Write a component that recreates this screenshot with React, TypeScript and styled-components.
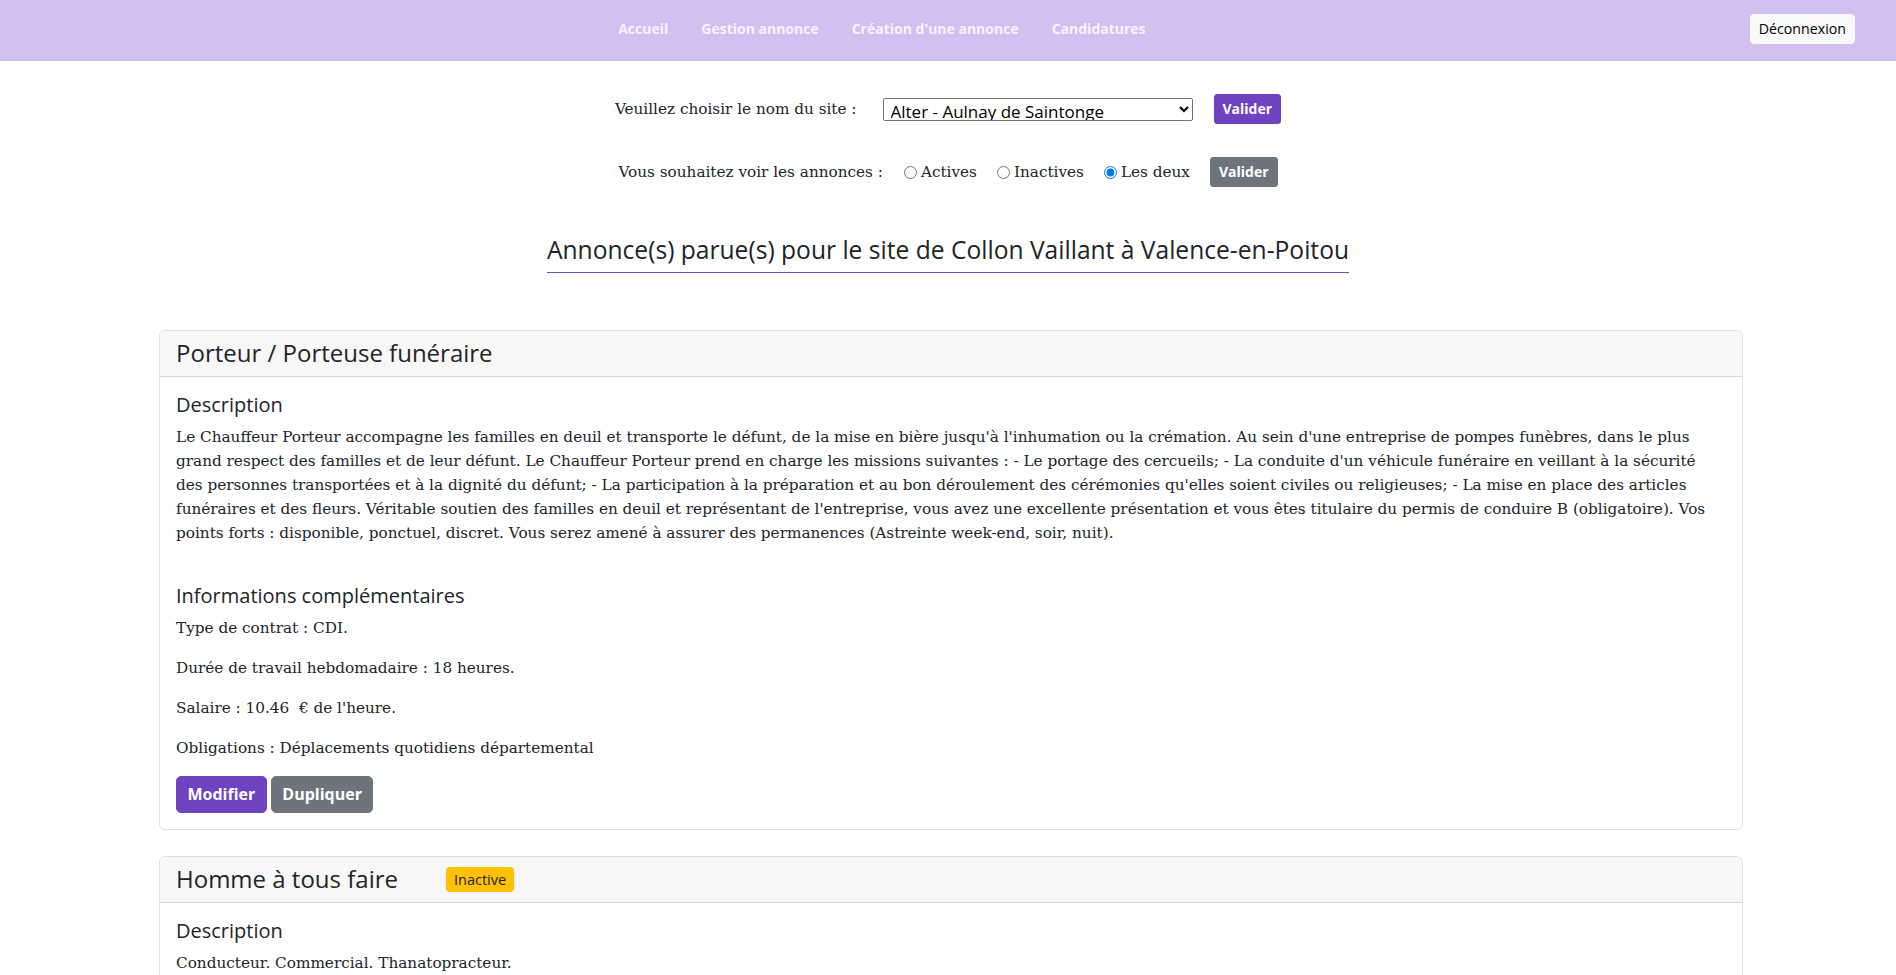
import React from "react";
import styled, { createGlobalStyle } from "styled-components";

const GlobalStyle = createGlobalStyle`
  html, body { margin: 0; padding: 0; background: #ffffff; }
  body {
    font-family: "DejaVu Serif", "Liberation Serif", serif;
    font-size: 15.25px;
    line-height: 24px;
    color: #212529;
  }
  * { box-sizing: border-box; }
`;

const Navbar = styled.nav`
  display: flex;
  align-items: center;
  height: 61px;
  padding: 0 41px 0 14px;
  background: #d4bff0;
`;

const NavList = styled.ul`
  display: flex;
  list-style: none;
  margin: -4px auto 0;
  padding: 0;
`;

const NavLink = styled.a`
  display: block;
  padding: 8px 16.5px;
  font-family: "Open Sans", sans-serif;
  font-weight: 700;
  font-size: 14px;
  line-height: 22px;
  color: rgba(255, 255, 255, 0.82);
  text-decoration: none;
`;

const LogoutButton = styled.button`
  height: 30px;
  margin-top: -3px;
  padding: 0 8px;
  border: 1px solid #f8f9fa;
  border-radius: 4px;
  background: #f8f9fa;
  color: #000;
  font-family: "Open Sans", sans-serif;
  font-size: 14.2px;
  line-height: 28px;
`;

const FilterForm = styled.form`
  display: flex;
  flex-direction: column;
  align-items: center;
  gap: 33px;
  padding-top: 33px;
`;

const FormRow = styled.div`
  display: flex;
  align-items: center;
  justify-content: center;
`;

const FieldLabel = styled.span<{ $gap: number }>`
  margin-right: ${(p) => p.$gap}px;
  white-space: nowrap;
`;

const SiteSelect = styled.select`
  width: 310px;
  height: 23px;
  margin-right: 21px;
  padding: 0 0 0 3px;
  border: 1px solid #767676;
  border-radius: 2px;
  background: #fff;
  color: #000;
  font-family: "Open Sans", sans-serif;
  font-size: 17px;
  line-height: 21px;
`;

const RadioOption = styled.label`
  display: flex;
  align-items: center;
  gap: 4px;
  margin-right: 20px;
  white-space: nowrap;

  input {
    width: 13px;
    height: 13px;
    margin: 0;
  }
`;

const SmallButton = styled.button<{ $tone: "primary" | "secondary" }>`
  height: 30px;
  padding: 0 8px;
  border: 1px solid ${(p) => (p.$tone === "primary" ? "#6f42c1" : "#6c757d")};
  border-radius: 3px;
  background: ${(p) => (p.$tone === "primary" ? "#6f42c1" : "#6c757d")};
  color: #fff;
  font-family: "Open Sans", sans-serif;
  font-weight: 700;
  font-size: 14px;
  line-height: 28px;
`;

const TitleWrap = styled.div`
  text-align: center;
  margin: 48px 0 57px;
`;

const PageTitle = styled.h3`
  display: inline-block;
  margin: 0;
  padding-bottom: 8px;
  border-bottom: 1px solid #6a4fc4;
  font-family: "Open Sans", sans-serif;
  font-weight: 400;
  font-size: 24.6px;
  line-height: 29px;
`;

const CardList = styled.div`
  display: flex;
  flex-direction: column;
  gap: 26px;
  margin: 0 153px 40px 159px;
`;

const Card = styled.section`
  border: 1px solid rgba(0, 0, 0, 0.125);
  border-radius: 6px;
  overflow: hidden;
`;

const CardHeader = styled.header`
  display: flex;
  align-items: center;
  padding: 8px 16px;
  background: #f7f7f7;
  border-bottom: 1px solid rgba(0, 0, 0, 0.125);
`;

const CardTitle = styled.h4`
  margin: 0;
  font-family: "Open Sans", sans-serif;
  font-weight: 400;
  font-size: 24px;
  line-height: 28.8px;
`;

const StatusBadge = styled.span`
  margin-left: 48px;
  height: 25px;
  padding: 0 8px;
  border-radius: 4px;
  background: #ffc107;
  color: #212529;
  font-family: "Open Sans", sans-serif;
  font-size: 14.5px;
  line-height: 25px;
`;

const CardBody = styled.div`
  padding: 16px;
`;

const SectionTitle = styled.h5<{ $spaced?: boolean }>`
  margin: ${(p) => (p.$spaced ? "39px" : "0")} 0 8px;
  font-family: "Open Sans", sans-serif;
  font-weight: 400;
  font-size: 20px;
  line-height: 24px;
`;

const Text = styled.p`
  margin: 0 0 16px;
`;

const Actions = styled.div`
  display: flex;
  gap: 4px;
`;

const ActionButton = styled.button<{ $tone: "primary" | "secondary" }>`
  height: 37px;
  padding: 0 10.5px;
  border: 1px solid ${(p) => (p.$tone === "primary" ? "#6f42c1" : "#6c757d")};
  border-radius: 5px;
  background: ${(p) => (p.$tone === "primary" ? "#6f42c1" : "#6c757d")};
  color: #fff;
  font-family: "Open Sans", sans-serif;
  font-weight: 700;
  font-size: 16px;
  line-height: 35px;
`;

const descriptionLines = [
  "Le Chauffeur Porteur accompagne les familles en deuil et transporte le défunt, de la mise en bière jusqu'à l'inhumation ou la crémation. Au sein d'une entreprise de pompes funèbres, dans le plus",
  "grand respect des familles et de leur défunt. Le Chauffeur Porteur prend en charge les missions suivantes : - Le portage des cercueils; - La conduite d'un véhicule funéraire en veillant à la sécurité",
  "des personnes transportées et à la dignité du défunt; - La participation à la préparation et au bon déroulement des cérémonies qu'elles soient civiles ou religieuses; - La mise en place des articles",
  "funéraires et des fleurs. Véritable soutien des familles en deuil et représentant de l'entreprise, vous avez une excellente présentation et vous êtes titulaire du permis de conduire B (obligatoire). Vos",
  "points forts : disponible, ponctuel, discret. Vous serez amené à assurer des permanences (Astreinte week-end, soir, nuit).",
];

export default function App() {
  return (
    <>
      <GlobalStyle />
      <Navbar>
        <NavList>
          <li><NavLink href="#">Accueil</NavLink></li>
          <li><NavLink href="#">Gestion annonce</NavLink></li>
          <li><NavLink href="#">Création d'une annonce</NavLink></li>
          <li><NavLink href="#">Candidatures</NavLink></li>
        </NavList>
        <LogoutButton type="button">Déconnexion</LogoutButton>
      </Navbar>

      <FilterForm onSubmit={(e) => e.preventDefault()}>
        <FormRow>
          <FieldLabel $gap={26}>Veuillez choisir le nom du site :</FieldLabel>
          <SiteSelect defaultValue="aulnay">
            <option value="aulnay">Alter - Aulnay de Saintonge</option>
            <option value="valence">Collon Vaillant à Valence-en-Poitou</option>
          </SiteSelect>
          <SmallButton $tone="primary" type="submit">Valider</SmallButton>
        </FormRow>
        <FormRow>
          <FieldLabel $gap={21}>Vous souhaitez voir les annonces :</FieldLabel>
          <RadioOption>
            <input type="radio" name="etat" value="actives" />
            Actives
          </RadioOption>
          <RadioOption>
            <input type="radio" name="etat" value="inactives" />
            Inactives
          </RadioOption>
          <RadioOption>
            <input type="radio" name="etat" value="deux" defaultChecked />
            Les deux
          </RadioOption>
          <SmallButton $tone="secondary" type="submit">Valider</SmallButton>
        </FormRow>
      </FilterForm>

      <TitleWrap>
        <PageTitle>Annonce(s) parue(s) pour le site de Collon Vaillant à Valence-en-Poitou</PageTitle>
      </TitleWrap>

      <CardList>
        <Card>
          <CardHeader>
            <CardTitle>Porteur / Porteuse funéraire</CardTitle>
          </CardHeader>
          <CardBody>
            <SectionTitle>Description</SectionTitle>
            <Text>
              {descriptionLines.map((line, i) => (
                <React.Fragment key={i}>
                  {line}
                  {i < descriptionLines.length - 1 && <br />}
                </React.Fragment>
              ))}
            </Text>
            <SectionTitle $spaced>Informations complémentaires</SectionTitle>
            <Text>Type de contrat : CDI.</Text>
            <Text>Durée de travail hebdomadaire : 18 heures.</Text>
            <Text>Salaire : 10.46{"\u00a0"} € de l'heure.</Text>
            <Text>Obligations : Déplacements quotidiens départemental</Text>
            <Actions>
              <ActionButton $tone="primary" type="button">Modifier</ActionButton>
              <ActionButton $tone="secondary" type="button">Dupliquer</ActionButton>
            </Actions>
          </CardBody>
        </Card>

        <Card>
          <CardHeader>
            <CardTitle>Homme à tous faire</CardTitle>
            <StatusBadge>Inactive</StatusBadge>
          </CardHeader>
          <CardBody>
            <SectionTitle>Description</SectionTitle>
            <Text>Conducteur. Commercial. Thanatopracteur.</Text>
          </CardBody>
        </Card>
      </CardList>
    </>
  );
}
